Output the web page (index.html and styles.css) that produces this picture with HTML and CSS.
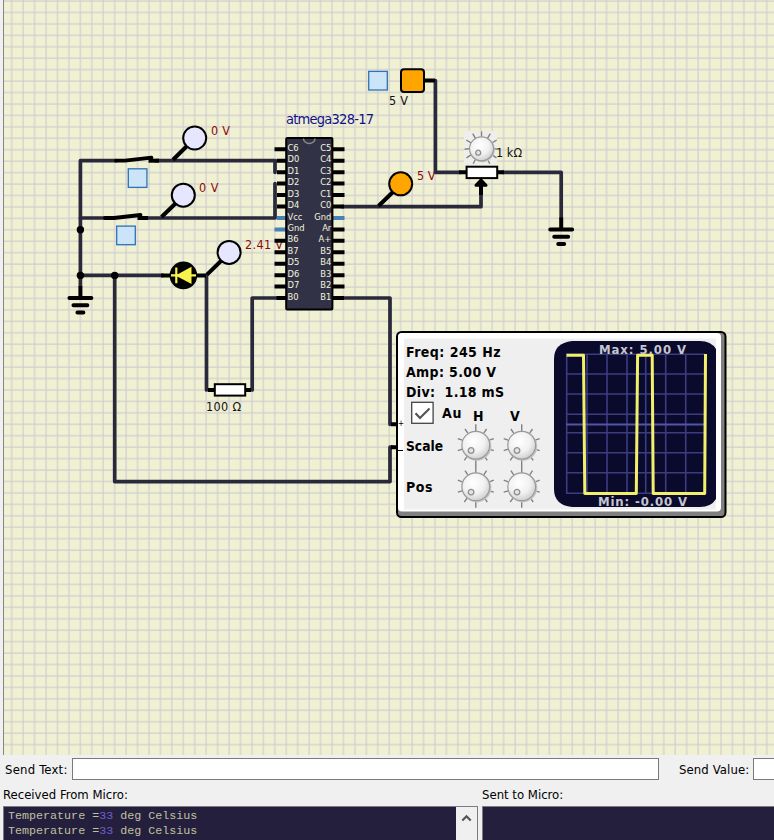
FILE: index.html
```html
<!DOCTYPE html>
<html lang="en">
<head>
<meta charset="utf-8">
<title>Circuit simulator</title>
<link rel="stylesheet" href="styles.css">
</head>
<body>
<main class="app">
<svg class="board" width="774" height="755" viewBox="0 0 774 755">
  <defs>
    <pattern id="grid" x="9.7" y="-1" width="11.44" height="11.44" patternUnits="userSpaceOnUse">
      <path class="grid-line" d="M2 0V11.44M0 2H11.44"/>
    </pattern>
    <radialGradient id="dial" cx=".42" cy=".36" r=".65">
      <stop offset="0" stop-color="#fff"/><stop offset=".6" stop-color="#f1f1f1"/><stop offset="1" stop-color="#cfcfcf"/>
    </radialGradient>
    <g id="knob">
      <path class="tick" d="M0-21V-14M0 14V21M8-12L10.8-16.2M13.5-5L18-6.6M13.5 4L18 5.4M8.5 11L11.5 15.2M-8-12L-10.8-16.2M-13.5-5L-18-6.6M-13.5 4L-18 5.4M-8.5 11L-11.5 15.2"/>
      <circle class="dial-shadow" cx="1" cy="1" r="14.6"/>
      <circle class="dial" r="13.9"/>
      <circle class="dot-mark" cx="-4.7" cy="5.3" r="2.8"/>
    </g>
    <g id="pot-knob">
      <path class="tick" d="M0-17.5V-12M6-10.5L8.8-15.2M10.5-6L15.2-8.8M12 0L17 .5M10.5 6L15 9M6 10.5L8.3 15M-6-10.5L-8.8-15.2M-10.5-6L-15.2-8.8M-12 0L-17 .5M-10.5 6L-15 9M-6 10.5L-8.3 15"/>
      <circle class="dial-shadow" cx=".8" cy=".8" r="12.6"/>
      <circle class="dial" r="12"/>
      <circle class="dot-mark" cx="-3.3" cy="3.9" r="2.5"/>
    </g>
    <g id="ground">
      <path class="lead" d="M0-12V0"/>
      <path class="earth" d="M-11 0H11M-7 7.3H7M-3 14.5H3"/>
    </g>
    <g id="switch">
      <path class="blade" d="M-20 0H-11L15.5-3"/>
      <path class="lead" d="M12.5 0H23"/>
    </g>
    <rect id="button" class="button" width="18.6" height="18.6"/>
  </defs>

  <rect class="paper" x="4" width="770" height="755"/>
  <rect x="4" width="770" height="755" fill="url(#grid)"/>
  <path class="frame" d="M3.5 0V755"/>

  <g class="volt">
    <text x="211" y="135" textLength="19">0 V</text>
    <text x="199" y="192" textLength="19.5">0 V</text>
    <text x="245" y="249" textLength="38">2.41 V</text>
    <text x="417" y="180" textLength="18.5">5 V</text>
  </g>

  <g class="wire">
    <path d="M80.4 286V160.7H116M156 160.7H275V172.3"/>
    <path d="M80.4 218H104M146 218H275V183.7"/>
    <path d="M80.4 275.4H163M114.7 275.4V481.6H390V447.2H392"/>
    <path d="M206.5 275.4V390M252.2 390V298H277M342 298H390V424.3"/>
    <path d="M342 206.7H481V194"/>
    <path d="M435.4 80.6V172.3H460M503 172.3H561.2V218"/>
  </g>
  <g class="lead">
    <path d="M161 275.4H206M208 390H251M391 424.3H397M391 447.2H397M424 80.6H435M459 172.3H504"/>
    <path d="M173 159.7L188 145M161.5 217L176 203M207 274.6L222 260M378.5 206L394 191"/>
  </g>
  <use href="#switch" x="136" y="160.7"/>
  <use href="#switch" x="125" y="218"/>
  <g class="joint"><circle cx="80.4" cy="229.7" r="3.7"/><circle cx="80.4" cy="275.4" r="3.7"/><circle cx="114.7" cy="275.4" r="3.7"/></g>
  <use href="#ground" x="80.4" y="298"/>
  <use href="#ground" x="561.2" y="229.5"/>

  <g class="probe">
    <circle cx="194.7" cy="138" r="11.5"/><circle cx="183.3" cy="195.2" r="11.5"/><circle cx="229.1" cy="252.4" r="11.5"/>
    <circle class="live" cx="400.7" cy="183.8" r="11.5"/>
  </g>
  <use href="#button" x="128.3" y="168.8"/>
  <use href="#button" x="116.7" y="226.1"/>
  <use href="#button" x="368.7" y="71.4"/>

  <circle cx="183.4" cy="275.4" r="13.8"/>
  <path class="led" d="M171 275.4H196M176.3 267.5V283.3"/>
  <path class="led-body" d="M175.5 275.4L191.5 266.8V284Z"/>

  <rect class="source" x="401" y="69.2" width="23" height="22.8" rx="3"/>
  <rect class="resistor" x="214.8" y="384.2" width="30.4" height="11.4"/>
  <path class="lead" d="M481 195V183"/>
  <path class="arrow" d="M481 180L486 185.3H476Z"/>
  <text class="value" x="389" y="105" textLength="19">5 V</text>
  <text class="value" x="206" y="411" textLength="35">100 Ω</text>
  <text class="value" x="496" y="157" textLength="26">1 kΩ</text>
  <rect class="knob-back" x="464" y="131" width="33" height="35"/>
  <rect class="resistor" x="466.6" y="166.7" width="30.6" height="11.4"/>
  <use href="#pot-knob" x="481.5" y="148.8"/>

  <text class="chip-name" x="286" y="124" textLength="88">atmega328-17</text>
  <path class="pin" d="M274.5 149.3H286M276.5 160.7H286M277 172.2H286M277 183.6H286M277 195H286M277 206.5H286M274.5 240.8H286M274.5 252.3H286M274.5 263.7H286M274.5 275.2H286M274.5 286.6H286M276.5 298H286M333 149.3H344.5M333 160.7H344.5M333 172.2H344.5M333 183.6H344.5M333 195H344.5M333 206.5H344M333 229.4H344.5M333 240.8H344.5M333 252.3H344.5M333 263.7H344.5M333 275.2H344.5M333 286.6H344.5M333 298H344"/>
  <path class="pin power" d="M277 218H286M274.5 229.4H286M333 218H344.5"/>
  <rect class="chip" x="286.2" y="138" width="46.2" height="171.4" rx="1"/>
  <path class="notch" d="M303.5 138.5A5.7 5 0 0 0 315 138.5"/>
  <g class="pin-name">
    <text x="287.5" y="150.7">C6</text><text x="287.5" y="162.1">D0</text><text x="287.5" y="173.6">D1</text><text x="287.5" y="185.1">D2</text><text x="287.5" y="196.7">D3</text><text x="287.5" y="208">D4</text><text x="287.5" y="219.6">Vcc</text><text x="287.5" y="231">Gnd</text><text x="287.5" y="242.2">B6</text><text x="287.5" y="253.8">B7</text><text x="287.5" y="265.2">D5</text><text x="287.5" y="276.8">D6</text><text x="287.5" y="288.2">D7</text><text x="287.5" y="299.7">B0</text>
  </g>
  <g class="pin-name right">
    <text x="331.3" y="150.7">C5</text><text x="331.3" y="162.1">C4</text><text x="331.3" y="173.6">C3</text><text x="331.3" y="185.1">C2</text><text x="331.3" y="196.7">C1</text><text x="331.3" y="208">C0</text><text x="331.3" y="219.6">Gnd</text><text x="331.3" y="231">Ar</text><text x="331.3" y="242.2">A+</text><text x="331.3" y="253.8">B5</text><text x="331.3" y="265.2">B4</text><text x="331.3" y="276.8">B3</text><text x="331.3" y="288.2">B2</text><text x="331.3" y="299.7">B1</text>
  </g>

  <g class="scope">
    <rect class="shell" x="397" y="332" width="328.5" height="185" rx="4.5"/>
    <rect class="rim" x="398" y="333" width="323" height="178.5" rx="4"/>
    <rect class="face" x="404" y="338.5" width="312" height="171"/>
    <g class="reading">
      <text x="406" y="357" textLength="94.5">Freq: 245 Hz</text>
      <text x="406" y="377" textLength="90">Amp: 5.00 V</text>
      <text x="406" y="397" textLength="98" xml:space="preserve">Div:  1.18 mS</text>
      <text x="442" y="418" textLength="19.5">Au</text>
      <text x="473" y="421" textLength="11">H</text>
      <text x="510" y="421" textLength="10.5">V</text>
      <text x="406" y="451" textLength="37" lengthAdjust="spacingAndGlyphs">Scale</text>
      <text x="406" y="492" textLength="26.5">Pos</text>
    </g>
    <text class="polarity" x="398" y="426">+</text>
    <path class="minus" d="M398 450.5H403"/>
    <rect class="check" x="411.7" y="402.3" width="21.4" height="21"/>
    <path class="check-mark" d="M415.5 413.2L420 418L429.5 408.5"/>
    <use href="#knob" x="475.8" y="445.2"/>
    <use href="#knob" x="521.7" y="445.2"/>
    <use href="#knob" x="475.8" y="486.8"/>
    <use href="#knob" x="521.7" y="486.8"/>
    <path class="screen" d="M572 341H700Q711 341 716 349V499Q711 507 700 507H572Q554 505 554 489V359Q554 343 572 341Z"/>
    <path class="graticule" d="M566.7 354.3V493.3M587 354.3V493.3M607 354.3V493.3M627 354.3V493.3M645.7 354.3V493.3M665.7 354.3V493.3M685.7 354.3V493.3M566 354.3H705M566 374H705M566 394H705M566 414.3H705M566 432.8H705M566 452.7H705M566 472.7H705M566 493.3H705"/>
    <path class="axis" d="M566 424.4H705"/>
    <text class="range" x="599" y="354" textLength="87">Max: 5.00 V</text>
    <text class="range" x="598" y="506" textLength="89">Min: -0.00 V</text>
    <path class="trace" d="M566.5 355.2H583.5L584.8 493.6H636.3L637.6 355.2H652.2L653.2 493.6H704.7L705.5 354"/>
  </g>
</svg>

<section class="serial">
  <div class="send-row">
    <label class="send-text">Send Text:</label><div class="field"></div>
    <label class="send-value">Send Value:</label><div class="field small"></div>
  </div>
  <div class="monitors">
    <div class="monitor received">
      <h2>Received From Micro:</h2>
      <div class="console">
        <div class="lines"><p>Temperature =<b>33</b> deg Celsius</p><p>Temperature =<b>33</b> deg Celsius</p></div>
        <div class="scroll"><svg width="11" height="8" viewBox="0 0 11 8"><path d="M1.3 6.5L5.5 2.3L9.7 6.5"/></svg></div>
      </div>
    </div>
    <div class="monitor sent">
      <h2>Sent to Micro:</h2>
      <div class="console"></div>
    </div>
  </div>
</section>
</main>
</body>
</html>
```
FILE: styles.css
```css
* { box-sizing: border-box; }
body { margin: 0; overflow: hidden; background: #f0f0f0; color: #000; }
.app {
  display: flex; flex-direction: column; width: 774px; height: 840px; overflow: hidden;
  font-family: "DejaVu Sans Condensed", "DejaVu Sans", sans-serif;
}
.board { display: block; flex: none; font-family: inherit; }
.board path { fill: none; }
.paper { fill: #f0f0d2; }
.board .grid-line { stroke: #cfcdd0; stroke-width: 1.15; }
.frame { stroke: #85868a; }

.wire { stroke: #29293b; stroke-width: 3.7; stroke-linecap: round; stroke-linejoin: round; }
.lead { stroke: #000; stroke-width: 4; }
.earth { stroke: #000; stroke-width: 3.9; stroke-linecap: round; }
.blade { stroke: #000; stroke-width: 3.8; stroke-linecap: round; stroke-linejoin: round; }
.button { fill: #cce4f8; stroke: #2e73b5; stroke-width: 1.3; }
.probe { fill: #e6e6ff; stroke: #000; stroke-width: 2; }
.live, .source { fill: #ffa500; }
.source { stroke: #000; stroke-width: 2; }
.led { stroke: #f7f34c; stroke-width: 2.2; }
.board .led-body { fill: #f7f34c; }
.resistor { fill: #fff; stroke: #000; stroke-width: 2; }
.board .arrow { fill: #000; stroke: #000; stroke-width: 3; stroke-linejoin: round; }
.volt { font-size: 12.5px; fill: #8b0808; }
.value { font-size: 12.5px; fill: #111; }

.chip-name { font-size: 14.5px; fill: #10108a; }
.chip { fill: #323246; stroke: #000; stroke-width: 2; }
.pin { stroke: #000; stroke-width: 4; }
.power { stroke: #4682b4; }
.notch { stroke: #8a8a8a; stroke-width: 1.4; }
.pin-name { font-size: 9.3px; fill: #f4f4dc; }
.right { text-anchor: end; }

.tick { stroke: #838383; stroke-width: 1.4; }
.dial-shadow { fill: #c4c4c4; }
.dial { fill: url(#dial); stroke: #999; stroke-width: 1.2; }
.dot-mark { fill: #e4e4e4; stroke: #8e8e8e; stroke-width: 1.3; }
.knob-back { fill: #efeeea; }

.shell { fill: #808080; stroke: #000; stroke-width: 2; }
.rim { fill: #fff; }
.face { fill: #efefef; }
.reading { font-size: 14px; font-weight: bold; }
.polarity { font-size: 8px; }
.minus { stroke: #000; }
.check { fill: #fff; stroke: #444; stroke-width: 1.3; }
.check-mark { stroke: #555; stroke-width: 2.2; }
.board .screen { fill: #0a0a2c; }
.graticule { stroke: #3c3c80; stroke-width: 1.6; }
.axis { stroke: #5252a6; stroke-width: 2; }
.trace { stroke: #f2f06a; stroke-width: 3; stroke-linejoin: round; }
.range { font-size: 13px; font-weight: bold; fill: #c6c6cf; }

.serial { flex: 1; min-height: 0; display: flex; flex-direction: column; font-size: 13px; }
.send-row { display: flex; align-items: center; height: 28px; padding-left: 5px; margin-bottom: 1px; }
.send-text { flex: none; width: 67px; letter-spacing: .2px; white-space: nowrap; }
.field { width: 587px; height: 22px; background: #fff; border: 1px solid #7a7a7a; flex: none; }
.send-value { width: 94px; padding-left: 20px; letter-spacing: .1px; white-space: nowrap; flex: none; }
.small { width: 60px; }
.monitors { display: flex; gap: 4px; padding-left: 3px; flex: 1; }
.monitor { display: flex; flex-direction: column; flex: none; }
.received { width: 475px; }
.sent { width: 320px; }
h2 { margin: 0; height: 22px; font-size: 13px; line-height: 21px; font-weight: normal; }
.console { flex: 1; display: flex; justify-content: space-between; background: #241f3c; border: 1px solid #7c7c80; border-bottom: 0; }
.lines { padding: 2px 0 0 4px; font: 11.7px/15px "Liberation Mono", monospace; color: #c0c0a2; }
.lines p { margin: 0; white-space: pre; }
.lines b { font-weight: normal; color: #6c60ce; }
.scroll { width: 21px; background: #f0f0f0; padding: 7px 0 0 5px; }
.scroll svg { display: block; }
.scroll path { fill: none; stroke: #555; stroke-width: 2.2; }
```
